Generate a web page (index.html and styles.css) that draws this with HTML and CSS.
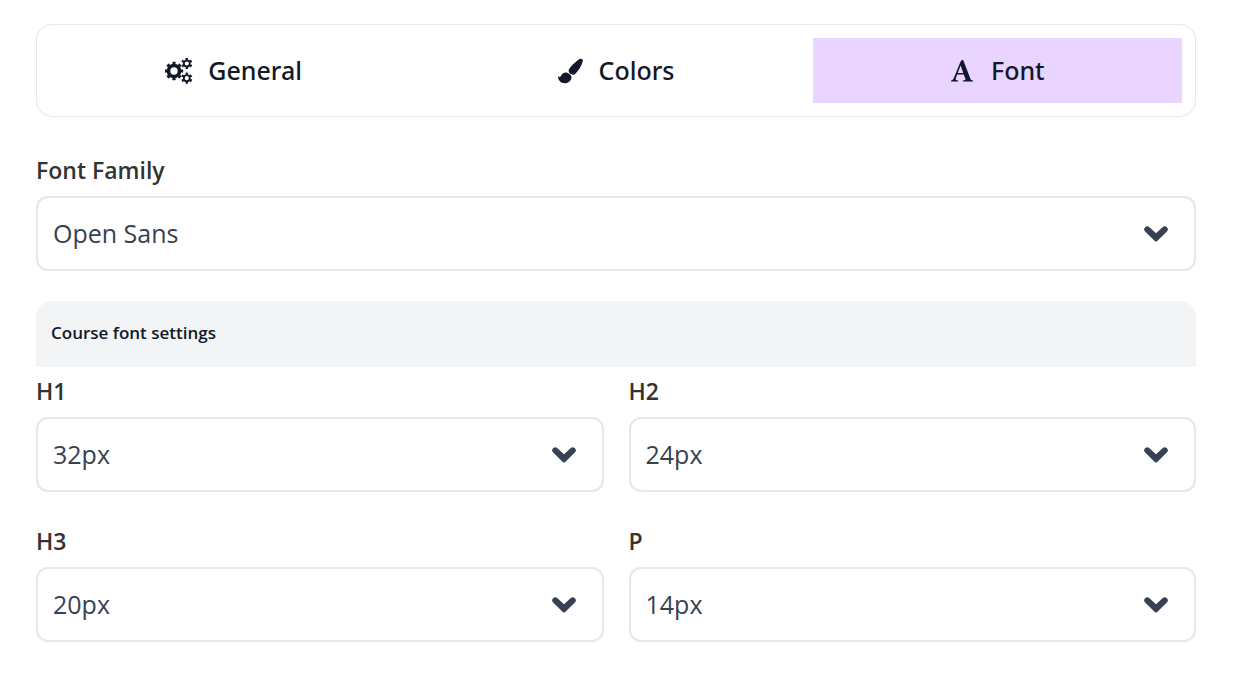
FILE: index.html
```html
<!DOCTYPE html>
<html lang="en">
<head>
<meta charset="utf-8">
<meta name="viewport" content="width=device-width, initial-scale=1">
<title>Theme settings</title>
<link rel="stylesheet" href="styles.css">
</head>
<body>
<svg class="sprite" aria-hidden="true">
  <symbol id="chevron" viewBox="0 0 24 16"><path d="M.9 5.2C-.2 4.1-.2 2.6 .9 1.5L1.5 .9C2.6-.1 4.1-.1 5.2 .9L12 7.3L18.8 .9C19.9-.1 21.4-.1 22.5 .9L23.1 1.5C24.2 2.6 24.2 4.1 23.1 5.2L13.2 14.9C12.4 15.7 11.6 15.7 10.8 14.9Z" fill="currentColor"/></symbol>
</svg>
<main class="settings">
  <nav class="tabs" role="tablist" aria-label="Theme settings">
    <button class="tab" type="button" role="tab" aria-selected="false">
      <svg class="tab-icon" viewBox="0 0 28 26" fill="none" stroke="currentColor" aria-hidden="true">
        <circle cx="9" cy="13" r="5.5" stroke-width="3.6"/>
        <circle cx="9" cy="13" r="8" stroke-width="2.4" pathLength="80" stroke-dasharray="5 5" stroke-dashoffset="2.5"/>
        <circle cx="21.8" cy="5.5" r="3" stroke-width="1.8"/>
        <circle cx="21.8" cy="5.5" r="4.6" stroke-width="2" pathLength="60" stroke-dasharray="5 5" stroke-dashoffset="7.5"/>
        <circle cx="21.8" cy="20.2" r="3" stroke-width="1.8"/>
        <circle cx="21.8" cy="20.2" r="4.6" stroke-width="2" pathLength="60" stroke-dasharray="5 5" stroke-dashoffset="7.5"/>
      </svg>
      <span>General</span>
    </button>
    <button class="tab" type="button" role="tab" aria-selected="false">
      <svg class="tab-icon" viewBox="0 0 28 26" fill="currentColor" aria-hidden="true">
        <path d="M25.6 .8C26.8 1.3 27 2.5 26.6 3.8C25.5 8 22.8 12.3 19.7 15.4C18.5 16.6 16.9 17.1 15.3 16.3C13.7 15.6 12.6 14.1 12.7 12.4C12.8 11.2 13.7 10.1 14.7 9C17.5 5.8 20.7 2.6 23.6 1C24.3 .6 25 .5 25.6 .8Z"/>
        <path d="M11.6 14.9C13.8 15.7 15.4 17.2 15.5 19.2C15.6 22.5 12.4 25.2 8.8 25.2C4.9 25.2 2 22.7 2 18.3C3.2 19.1 4.5 19.3 5.3 17.6C6.3 15.3 9 14 11.6 14.9Z"/>
      </svg>
      <span>Colors</span>
    </button>
    <button class="tab tab-active" type="button" role="tab" aria-selected="true">
      <svg class="tab-icon" viewBox="0 0 28 26" fill="currentColor" aria-hidden="true">
        <path fill-rule="evenodd" d="M13.8 2H15.2L22.2 20.2C22.8 21.7 23.3 22.3 25 22.5V23.6H14.8V22.5C17.4 22.3 17.8 21.9 17.2 20.2L15.8 16.5H9.2L8 19.7C7.2 21.7 7.8 22.3 10.2 22.5V23.6H3V22.5C4.5 22.2 5.1 21.7 5.8 19.9L12.5 3.8ZM12.6 7.5L9.7 15.1H15.3Z"/>
      </svg>
      <span>Font</span>
    </button>
  </nav>

  <div class="field">
    <label class="label" for="family">Font Family</label>
    <div class="control">
      <select class="select" id="family"><option>Open Sans</option><option>Roboto</option><option>Lato</option></select>
      <svg class="chevron" aria-hidden="true"><use href="#chevron"/></svg>
    </div>
  </div>

  <section class="course">
    <h2 class="course-title">Course font settings</h2>
    <div class="sizes">
      <div class="field">
        <label class="label" for="h1">H1</label>
        <div class="control">
          <select class="select" id="h1"><option>32px</option></select>
          <svg class="chevron" aria-hidden="true"><use href="#chevron"/></svg>
        </div>
      </div>
      <div class="field">
        <label class="label" for="h2">H2</label>
        <div class="control">
          <select class="select" id="h2"><option>24px</option></select>
          <svg class="chevron" aria-hidden="true"><use href="#chevron"/></svg>
        </div>
      </div>
      <div class="field">
        <label class="label" for="h3">H3</label>
        <div class="control">
          <select class="select" id="h3"><option>20px</option></select>
          <svg class="chevron" aria-hidden="true"><use href="#chevron"/></svg>
        </div>
      </div>
      <div class="field">
        <label class="label" for="p">P</label>
        <div class="control">
          <select class="select" id="p"><option>14px</option></select>
          <svg class="chevron" aria-hidden="true"><use href="#chevron"/></svg>
        </div>
      </div>
    </div>
  </section>
</main>
</body>
</html>
```
FILE: styles.css
```css
* {
  box-sizing: border-box;
}

body {
  margin: 0;
  background: #fff;
  color: #333;
  font-family: "Open Sans", "Noto Sans", sans-serif;
}

.sprite {
  position: absolute;
  width: 0;
  height: 0;
}

.settings {
  padding: 24px 57px 24px 36px;
}

.tabs {
  display: grid;
  grid-template-columns: repeat(3, 1fr);
  gap: 12px;
  margin-bottom: 35px;
  padding: 13px;
  border: 1px solid #e5e7eb;
  border-radius: 16px;
}

.tab {
  display: flex;
  align-items: center;
  justify-content: center;
  gap: 15px;
  padding: 14px 16px 14px 14px;
  border: 0;
  background: transparent;
  color: #111827;
  font-family: "Noto Sans", "Open Sans", sans-serif;
  font-size: 25px;
  font-weight: 500;
  line-height: 37px;
  cursor: pointer;
}

.tab-active {
  background: #e9d5ff;
}

.tab-icon {
  width: 28px;
  height: 26px;
}

.field {
  display: flex;
  flex-direction: column;
  gap: 8px;
}

.label {
  font-size: 23px;
  font-weight: 600;
  line-height: 36px;
}

.control {
  display: grid;
  align-items: center;
}

.select,
.chevron {
  grid-area: 1 / 1;
}

.select {
  width: 100%;
  padding: 17px 60px 18px 15px;
  border: 2px solid #e5e7eb;
  border-radius: 12px;
  appearance: none;
  background: #fff;
  color: #374151;
  font-family: inherit;
  font-size: 25px;
  line-height: 36px;
}

.chevron {
  justify-self: end;
  width: 24px;
  height: 16px;
  margin-right: 28px;
  color: #374151;
  pointer-events: none;
}

.course {
  margin-top: 30px;
}

.course-title {
  margin: 0;
  padding: 14px 15px 16px;
  border-radius: 16px 16px 0 0;
  background: #f3f4f6;
  color: #111827;
  font-size: 17px;
  font-weight: 600;
  line-height: 36px;
}

.sizes {
  display: grid;
  grid-template-columns: repeat(2, 1fr);
  gap: 31px 25px;
  padding-top: 6px;
}
```
